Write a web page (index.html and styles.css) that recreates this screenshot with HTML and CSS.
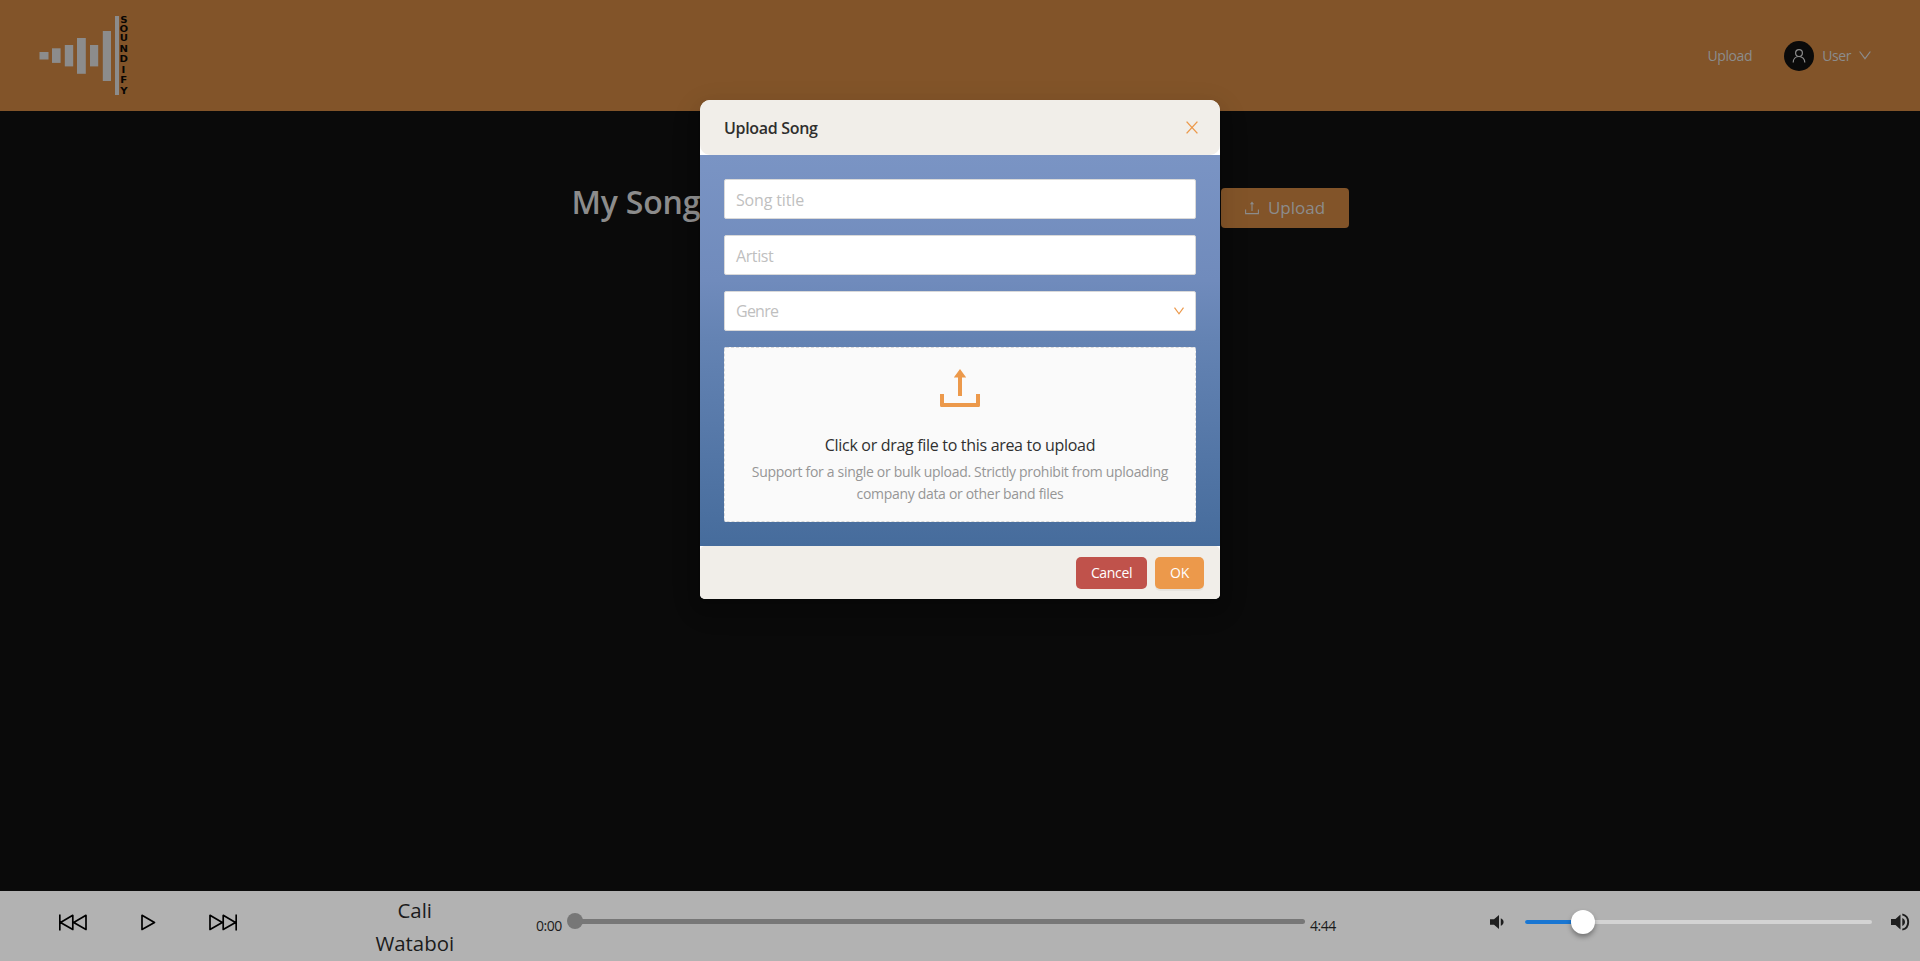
FILE: index.html
```
<!DOCTYPE html>
<html lang="en">
<head>
<meta charset="utf-8">
<title>Soundify</title>
<link rel="stylesheet" href="styles.css">
</head>
<body>
<div class="app">
  <header class="header">
    <svg class="logo" width="92" height="84" viewBox="38 14 92 84">
      <g fill="#8c8c8c">
        <rect x="39.5" y="52" width="9" height="7.5"/>
        <rect x="52" y="48.3" width="8.6" height="14.6"/>
        <rect x="64.8" y="45" width="8.4" height="21.4"/>
        <rect x="77" y="38" width="8.8" height="35.8"/>
        <rect x="90" y="45" width="8.2" height="21.4"/>
        <rect x="102.8" y="31" width="8.2" height="50"/>
        <rect x="115" y="16" width="4" height="79"/>
      </g>
      <g class="logo-text" transform="translate(123.8 0) scale(1.18 1)">
        <text y="22.8">S</text><text y="31.9">O</text><text y="41.3">U</text><text y="52">N</text>
        <text y="62">D</text><text x="-.4" y="72.8">I</text><text y="83.2">F</text><text y="93.6">Y</text>
      </g>
    </svg>
    <nav class="nav">
      <a class="nav-link">Upload</a>
      <div class="user">
        <span class="avatar">
          <svg width="14" height="14" viewBox="0 0 14 14" fill="none" stroke="#8c8c8c" stroke-width="1.2"><circle cx="7" cy="4.1" r="3.4"/><path d="M1.2 13.6C1.2 10 3.7 7.5 7 7.5s5.800 2.500 5.800 6.100"/></svg>
        </span>
        <span class="user-name">User</span>
        <svg class="user-arrow" width="12" height="9" viewBox="0 0 12 9" fill="none" stroke="#8c8c8c" stroke-width="1.200"><path d="M.6.5 6 7.700 11.400.5"/></svg>
      </div>
    </nav>
  </header>

  <main class="page">
    <div class="page-head">
      <h1 class="page-title">My Songs</h1>
      <button class="page-upload">
        <svg width="14" height="14" viewBox="0 0 14 14" fill="none" stroke="#8c8c8c" stroke-width="1.100"><path d="M.6 8.600v4h12.800v-4M7 10V2.500"/><path d="M7 .6 4.900 3.200h4.200z" fill="#8c8c8c" stroke="none"/></svg>
        <span>Upload</span>
      </button>
    </div>
  </main>

  <footer class="player">
    <div class="controls">
      <svg width="28" height="17" viewBox="0 0 28 17" class="ctl"><path d="M.8.5v16M13.800 1.300v14.200L1.500 8.400zM27 1.300v14.200L14.700 8.400z"/></svg>
      <svg width="15" height="17" viewBox="0 0 15 17" class="ctl"><path d="M1 1.300v14.200L13.500 8.400z"/></svg>
      <svg width="28" height="17" viewBox="0 0 28 17" class="ctl"><path d="M27.200.5v16M14.200 1.300v14.200L26.500 8.400zM1 1.300v14.200L13.300 8.400z"/></svg>
    </div>
    <div class="track"><div>Cali</div><div>Wataboi</div></div>
    <div class="progress">
      <span class="time">0:00</span>
      <div class="rail"><span class="rail-thumb"></span></div>
      <span class="time">4:44</span>
    </div>
    <div class="volume">
      <svg width="14" height="14" viewBox="0 0 14 14" fill="#1e1e1e"><path d="M0 4.200h4L9 0v14L4 9.800H0zM10.800 3.200c1.700.7 2.800 2 2.800 3.800s-1.100 3.100-2.800 3.800z"/></svg>
      <div class="vol-rail"><span class="vol-fill"></span><span class="vol-thumb"></span></div>
      <svg width="19" height="18" viewBox="0 0 19 18" fill="#1e1e1e"><path d="M0 6h4.500L9.500 1.500v15L4.500 12H0zM11.300 5c1.700.8 2.700 2.200 2.700 4s-1 3.200-2.700 4z"/><path d="M11.300 1.300C15 2.200 17.200 5.200 17.200 9s-2.200 6.800-5.900 7.700" fill="none" stroke="#1e1e1e" stroke-width="1.900"/></svg>
    </div>
  </footer>

  <section class="modal">
    <div class="modal-head">
      <span class="modal-title">Upload Song</span>
      <svg width="12" height="13" viewBox="0 0 12 13" fill="none" stroke="#ec994b" stroke-width="1.400"><path d="M.6.600 11.400 12.400M11.400.600.6 12.400"/></svg>
    </div>
    <div class="modal-body">
      <div class="field title-field">Song title</div>
      <div class="field artist-field">Artist</div>
      <div class="field select"><span>Genre</span>
        <svg width="10" height="8" viewBox="0 0 10 8" fill="none" stroke="#ec994b" stroke-width="1.200"><path d="M.5.700 5 6.800 9.500.700"/></svg>
      </div>
      <div class="dragger">
        <svg class="drag-icon" width="40" height="38" viewBox="0 0 40 38" fill="#ec994b"><path d="M20 0 26.200 8.500H22V27H18V8.500H13.800zM0 25h4v9h32v-9h4v11.500a1.500 1.500 0 0 1-1.500 1.500h-37A1.500 1.500 0 0 1 0 36.500z"/></svg>
        <div class="drag-text">Click or drag file to this area to upload</div>
        <div class="drag-hint">Support for a single or bulk upload. Strictly prohibit from uploading<br>company data or other band files</div>
      </div>
    </div>
    <div class="modal-foot">
      <button class="btn cancel">Cancel</button>
      <button class="btn ok">OK</button>
    </div>
  </section>
</div>
</body>
</html>
```
FILE: styles.css
```
* { box-sizing: border-box; }
body { margin: 0; font-family: "Open Sans", "Noto Sans", sans-serif; font-size: 14px; }
svg { display: block; flex: none; }
button { border: 0; margin: 0; padding: 0; font-family: inherit; }

.app { position: relative; height: 961px; display: flex; flex-direction: column; background: #0a0a0a; overflow: hidden; }

.header { height: 111px; flex: none; display: flex; justify-content: space-between; padding: 14px 49px 0 38px; background: #825429; }
.logo-text { font: bold 8.600px "DejaVu Sans", sans-serif; text-anchor: middle; fill: #080604; }
.nav { height: 84px; display: flex; align-items: center; gap: 32px; color: #8c8c8c; }
.nav-link { letter-spacing: -.4px; padding-bottom: 1px; }
.user { display: flex; align-items: center; gap: 8px; }
.avatar { width: 30px; height: 30px; border-radius: 50%; background: #0a0a0a; display: flex; align-items: center; justify-content: center; }
.user-name { letter-spacing: -.400px; padding-bottom: 1px; }
.user-arrow { margin-bottom: 2px; }

.page { flex: 1; padding-top: 71px; }
.page-head { width: 777px; margin: 0 auto; display: flex; justify-content: space-between; }
.page-title { margin: 0; font-size: 32px; font-weight: 600; line-height: 39px; letter-spacing: -.200px; color: #8c8c8c; }
.page-upload { width: 128px; height: 40px; margin-top: 6px; padding: 0 0 1px 1px; display: flex; align-items: center; justify-content: center; gap: 9px; border-radius: 4px; background: #825429; color: #8c8c8c; font-size: 17px; }

.player { height: 70px; flex: none; display: flex; background: #b2b2b2; color: #1b1b1b; }
.controls { width: 362px; display: flex; align-items: flex-start; gap: 53.500px; padding: 23px 0 0 59px; }
.ctl { fill: none; stroke: #000; stroke-width: 1.700; stroke-linejoin: round; }
.track { width: 109px; padding-top: 3px; text-align: center; font-size: 20.400px; line-height: 33px; }
.progress { width: 868px; display: flex; gap: 6px; padding: 0 0 0 67px; }
.time { width: 27px; padding-top: 25px; line-height: 20px; letter-spacing: -.500px; }
.progress .time:last-child { margin-left: -1px; }
.rail { position: relative; width: 737px; height: 5px; margin: 28px 0 0 -1px; flex: none; border-radius: 3px; background: #777; }
.rail-thumb { position: absolute; left: -1px; top: -6px; width: 16px; height: 16px; border-radius: 50%; background: #777; }
.volume { flex: 1; display: flex; align-items: center; padding: 0 10px 8px 153px; }
.vol-rail { position: relative; width: 347px; height: 4px; margin: 0 19px 0 21px; border-radius: 2px; background: #d3d3d3; }
.vol-fill { display: block; width: 58px; height: 4px; border-radius: 2px; background: #1976d2; }
.vol-thumb { position: absolute; left: 46px; top: -10px; width: 24px; height: 24px; border-radius: 50%; background: #fff; box-shadow: 0 3px 5px rgba(0, 0, 0, .35); }

.modal { position: absolute; left: 700px; top: 100px; width: 520px; border-radius: 10px 10px 5px 5px; background: #fff; box-shadow: 0 3px 6px -4px rgba(0, 0, 0, .12), 0 6px 16px rgba(0, 0, 0, .08), 0 9px 28px 8px rgba(0, 0, 0, .05); }
.modal-head { height: 55px; display: flex; align-items: center; justify-content: space-between; padding: 0 22px 0 24px; border-radius: 10px; background: #f1eee9; color: #2f2e2d; }
.modal-title { font-size: 16px; font-weight: 600; letter-spacing: -.320px; }
.modal-body { height: 391px; display: flex; flex-direction: column; gap: 16px; padding: 24px; background: linear-gradient(#7a94c4, #708bbc 32%, #6483b3 47%, #466c9c); }
.field { height: 40px; display: flex; align-items: center; padding: 1px 11px 0; border: 1px solid #d9d9d9; border-radius: 2px; background: #fff; color: #bfbfbf; font-size: 16px; }
.title-field { letter-spacing: -.150px; }
.artist-field { letter-spacing: -.400px; }
.select { justify-content: space-between; letter-spacing: -.750px; padding-top: 0; }
.dragger { height: 175px; display: flex; flex-direction: column; align-items: center; padding-top: 21px; border: 1px dashed #d9d9d9; border-radius: 2px; background: #fafafa; text-align: center; }
.drag-text { margin-top: 26px; font-size: 16px; line-height: 25px; letter-spacing: -.310px; color: #303030; }
.drag-hint { margin-top: 3px; line-height: 22px; letter-spacing: -.310px; color: #969696; white-space: nowrap; }
.modal-foot { height: 53px; display: flex; justify-content: flex-end; gap: 8px; padding: 11px 16px 0; border-radius: 5px; background: #f1eee9; }
.btn { height: 32px; padding-bottom: 1px; border-radius: 5px; color: #fff; font-size: 14px; letter-spacing: -.350px; }
.cancel { width: 71px; background: #c0524b; }
.ok { width: 49px; background: #ec994b; box-shadow: 0 2px 0 rgba(0, 0, 0, .045); }
```
